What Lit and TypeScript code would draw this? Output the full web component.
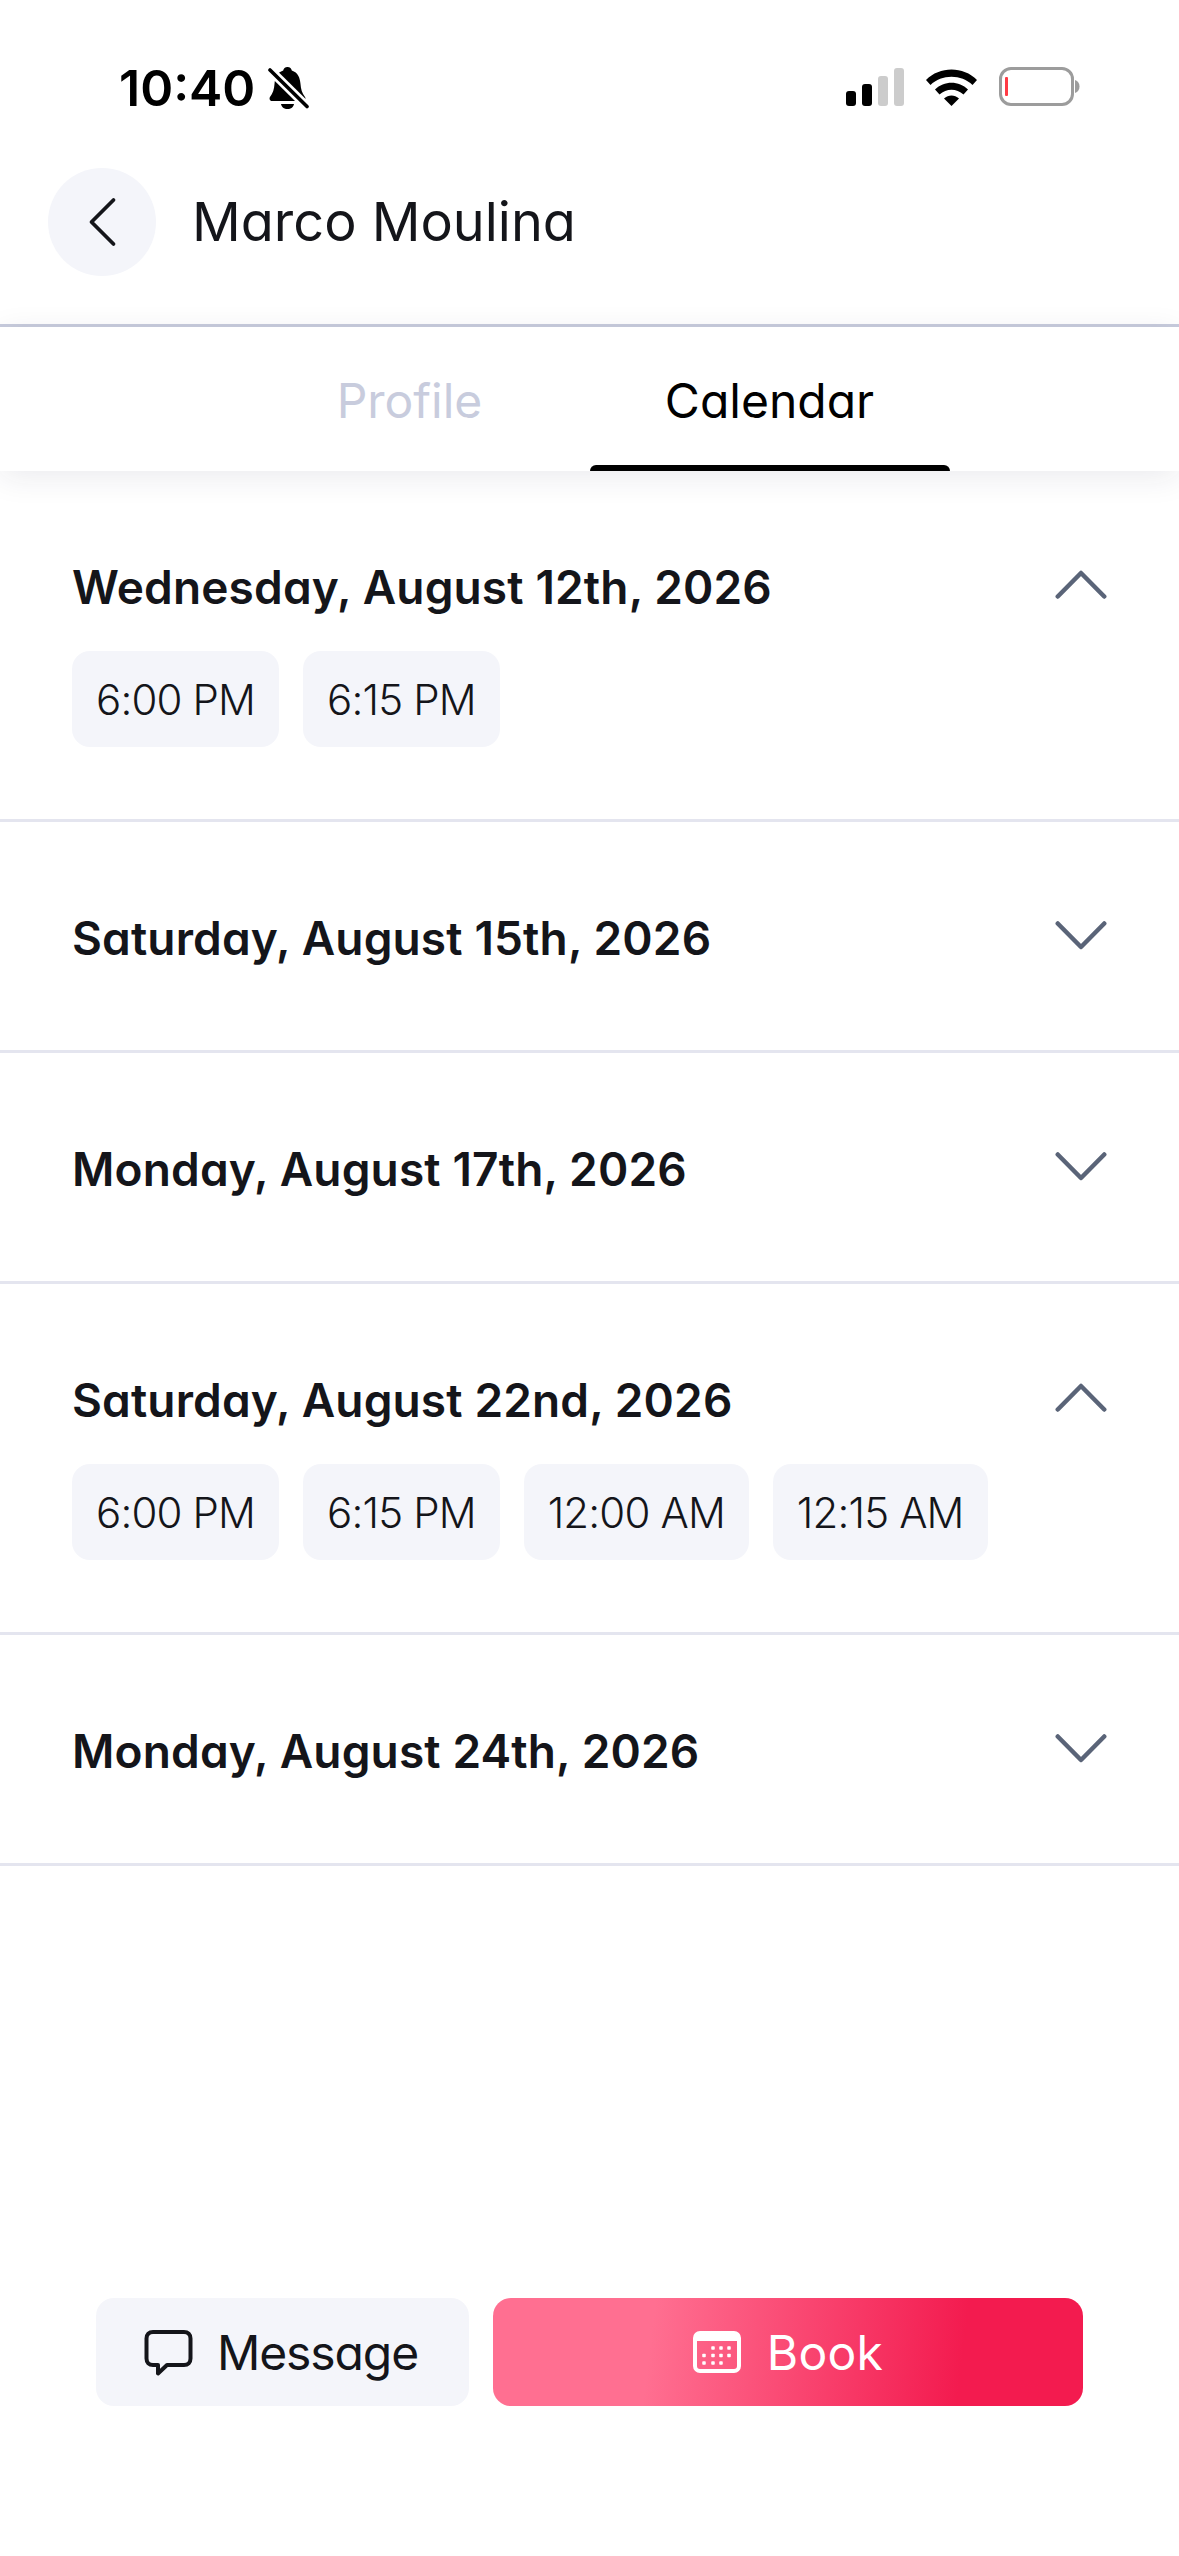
import { LitElement, html, css, svg } from "lit";
import { customElement } from "lit/decorators.js";

const days = [
  { t: "Wednesday, August 12th, 2026", s: ["6:00 PM", "6:15 PM"] },
  { t: "Saturday, August 15th, 2026", s: [] },
  { t: "Monday, August 17th, 2026", s: [] },
  { t: "Saturday, August 22nd, 2026", s: ["6:00 PM", "6:15 PM", "12:00 AM", "12:15 AM"] },
  { t: "Monday, August 24th, 2026", s: [] },
];

const dots = [
  [20, 17], [28, 17], [36, 17],
  [11, 24.5], [20, 24.5], [28, 24.5], [36, 24.5],
  [11, 32], [20, 32], [28, 32],
];

@customElement("app-root")
export class AppRoot extends LitElement {
  static styles = css`
    :host {
      display: flex;
      flex-direction: column;
      width: 1179px;
      height: 2556px;
      background: #fff;
      font-family: Inter, "Liberation Sans", sans-serif;
      font-feature-settings: "cv11" 1;
      color: #14151a;
      overflow: hidden;
    }
    .status {
      height: 168px;
      box-sizing: border-box;
      padding: 67px 97px 0 119px;
      display: flex;
      align-items: flex-start;
      justify-content: space-between;
    }
    .time-wrap { display: flex; align-items: center; gap: 13px; height: 42px; }
    .time { font-size: 50px; font-weight: 600; color: #000; line-height: 42px; }
    .sys { display: flex; align-items: center; height: 40px; }
    .head {
      display: flex;
      align-items: center;
      gap: 36px;
      padding: 0 48px 48px;
      border-bottom: 3px solid #c8ccdd;
    }
    .back {
      width: 108px;
      height: 108px;
      border-radius: 50%;
      background: #f4f5fa;
      display: flex;
      align-items: center;
      justify-content: center;
    }
    .name { font-size: 54px; font-weight: 400; line-height: 64px; }
    .tabs {
      display: flex;
      justify-content: center;
      background: #fff;
      position: relative;
      z-index: 1;
      box-shadow: 0 6px 30px rgba(30, 35, 70, 0.09);
    }
    .tab {
      width: 360px;
      height: 144px;
      box-sizing: border-box;
      padding-top: 46px;
      text-align: center;
      font-size: 48px;
      line-height: 56px;
      color: #c8ccdd;
      position: relative;
    }
    .tab.on { color: #000; }
    .tab.on::after {
      content: "";
      position: absolute;
      left: 0;
      right: 0;
      bottom: 0;
      height: 6px;
      background: #000;
      border-radius: 6px 6px 0 0;
    }
    .row { border-bottom: 3px solid #e4e5ef; padding: 88px 70px 84px 72px; }
    .row.open { padding-bottom: 72px; }
    .row-head {
      display: flex;
      align-items: center;
      justify-content: space-between;
      height: 56px;
    }
    .title { font-size: 46px; font-weight: 600; letter-spacing: 0.15px; }
    .slots { display: flex; gap: 24px; margin-top: 36px; }
    .slot {
      height: 96px;
      box-sizing: border-box;
      padding: 0 24px;
      display: flex;
      align-items: center;
      background: #f4f5fa;
      border-radius: 18px;
      font-size: 42px;
      font-weight: 350;
      letter-spacing: -0.85px;
    }
    .spacer { flex: 1; }
    .actions { display: flex; gap: 24px; padding: 0 96px 150px; }
    .btn {
      height: 108px;
      border-radius: 18px;
      display: flex;
      align-items: center;
      justify-content: center;
      font-size: 48px;
    }
    .msg { width: 369px; padding-right: 4px; background: #f4f5fa; gap: 24px; letter-spacing: -1.1px; }
    .book {
      flex: 1;
      color: #fff;
      gap: 26px;
      letter-spacing: 0.3px;
      background: linear-gradient(97deg, #ff6f91 27%, #f31b4f 79%);
    }
    svg { display: block; }
  `;

  private chevron(open: boolean) {
    return html`<svg width="56" height="34" viewBox="0 0 56 34" fill="none" stroke="#5a6478" stroke-width="4.5" stroke-linecap="round" stroke-linejoin="round">
      ${open
        ? svg`<path d="M4.750 26.500 L28 3 L51.250 26.500"/>`
        : svg`<path d="M4.750 2.500 L28 26 L51.250 2.500"/>`}
    </svg>`;
  }

  render() {
    return html`
      <div class="status">
        <div class="time-wrap">
          <span class="time">10:40</span>
          <svg width="42" height="42" viewBox="0 0 42 42">
            <path d="M19.500 0c2.500 0 4 1.800 4.300 3.500C30 5.500 32 11 32.500 17c.3 5 1.500 9 4.500 13 1 1.500.3 4-2 4H4c-2.300 0-3-2.500-2-4 3-4 4.200-8 4.500-13C7 11 9 5.500 15.200 3.500 15.500 1.800 17 0 19.500 0z" fill="#000"/>
            <path d="M13 37h13c-.5 3-3 5-6.500 5s-6-2-6.500-5z" fill="#000"/>
            <path d="M1.500 2.500 L39.500 40" stroke="#fff" stroke-width="9"/>
            <path d="M2 3 L39 39.500" stroke="#000" stroke-width="3.600" stroke-linecap="round"/>
          </svg>
        </div>
        <div class="sys">
          <svg width="236" height="40" viewBox="0 0 236 40">
            <rect x="0" y="24" width="10" height="15" rx="3" fill="#000"/>
            <rect x="16" y="17" width="10" height="22" rx="3" fill="#000"/>
            <rect x="32" y="9" width="10" height="30" rx="3" fill="#ccc"/>
            <rect x="48" y="1" width="10" height="38" rx="3" fill="#ccc"/>
            <path d="M80 13 C93.500-1 117.500-1 131 13 L126.500 18 C115.500 7 95.500 7 84.500 18Z" fill="#000"/>
            <path d="M89 22.500 C98 13.500 113 13.500 122 22.500 L117.500 27.500C110.500 21 100.500 21 93.500 27.500Z" fill="#000"/>
            <path d="M98 31.500 C102.500 27.500 108.500 27.500 113 31.500 L105.500 39Z" fill="#000"/>
            <rect x="154.500" y="1.500" width="72" height="36" rx="10.500" fill="none" stroke="#9c9c9c" stroke-width="3"/>
            <rect x="159" y="10" width="3" height="19" rx="1" fill="#ff3b45"/>
            <path d="M229 13c3 1 4.500 3.500 4.500 6.500s-1.500 5.500-4.500 6.500z" fill="#9c9c9c"/>
          </svg>
        </div>
      </div>
      <div class="head">
        <div class="back">
          <svg width="30" height="52" viewBox="0 0 30 52" fill="none" stroke="#14151a" stroke-width="3.800" stroke-linecap="round" stroke-linejoin="round"><path d="M26.500 4 L4.500 26 L26.500 48"/></svg>
        </div>
        <div class="name">Marco Moulina</div>
      </div>
      <div class="tabs">
        <div class="tab">Profile</div>
        <div class="tab on">Calendar</div>
      </div>
      ${days.map(
        (d) => html`<div class="row ${d.s.length ? "open" : ""}">
          <div class="row-head">
            <div class="title">${d.t}</div>
            ${this.chevron(d.s.length > 0)}
          </div>
          ${d.s.length
            ? html`<div class="slots">${d.s.map((x) => html`<div class="slot">${x}</div>`)}</div>`
            : ""}
        </div>`
      )}
      <div class="spacer"></div>
      <div class="actions">
        <div class="btn msg">
          <svg width="50" height="47" viewBox="0 0 50 47" fill="none" stroke="#14151a" stroke-width="4" stroke-linejoin="round" stroke-linecap="round">
            <path d="M10 3 H41 C45 3 47.500 5.500 47.500 9.500 V29.500 C47.500 33.500 45 36 41 36 H24 L15 44.500 V36 H10 C6 36 3.500 33.500 3.500 29.500 V9.500 C3.500 5.500 6 3 10 3Z"/>
          </svg>
          <span>Message</span>
        </div>
        <div class="btn book">
          <svg width="48" height="42" viewBox="0 0 48 42">
            <rect x="2" y="2" width="44" height="38" rx="5" fill="none" stroke="#fff" stroke-width="4"/>
            <path d="M2 10 V6 C2 3 3.500 1 6 1 H42 C44.500 1 46 3 46 6 V10Z" fill="#fff"/>
            <g fill="#fff">
              ${dots.map(([x, y]) => svg`<rect x="${x - 1.75}" y="${y - 1.75}" width="3.500" height="3.500" rx="0.800"/>`)}
            </g>
          </svg>
          <span>Book</span>
        </div>
      </div>
    `;
  }
}
